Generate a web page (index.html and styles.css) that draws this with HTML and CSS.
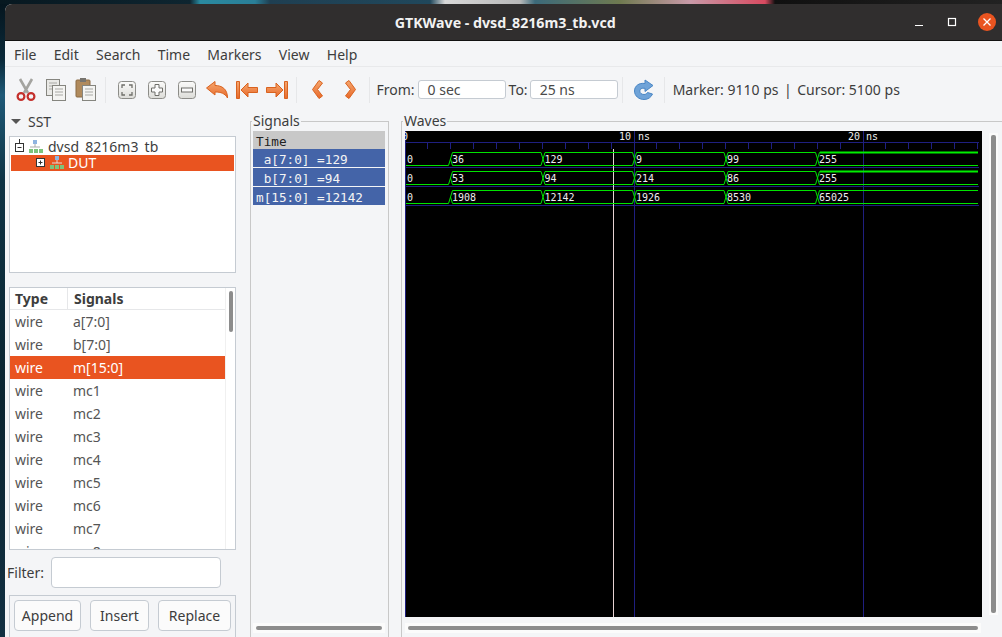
FILE: index.html
```html
<!DOCTYPE html>
<html>
<head>
	<title>GTKWave - dvsd_8216m3_tb.vcd</title>
	<meta charset="utf-8" />
	<link rel="stylesheet" href="styles.css">
</head>
<body>
<div class="wallpaper-top"></div>
<div class="window">
	<!-- title bar -->
	<div class="titlebar">
		<span class="title">GTKWave - dvsd_8216m3_tb.vcd</span>
		<div class="controls">
			<svg width="10" height="10" viewBox="0 0 10 10"><path d="M1 8.5H9" stroke="#fff" stroke-width="1.2"/></svg>
			<svg width="10" height="10" viewBox="0 0 10 10"><rect x="1.5" y="1.5" width="7" height="7" fill="none" stroke="#fff" stroke-width="1.2"/></svg>
			<span class="close"><svg width="10" height="10" viewBox="0 0 10 10"><path d="M1.5 1.5L8.5 8.5M8.5 1.5L1.5 8.5" stroke="#fff" stroke-width="1.3"/></svg></span>
		</div>
	</div>

	<div class="menubar">
		<span>File</span><span>Edit</span><span>Search</span><span>Time</span><span>Markers</span><span>View</span><span>Help</span>
	</div>

	<!-- toolbar -->
	<div class="toolbar">
		<span class="slot"><svg width="20" height="24" viewBox="0 0 20 24">
			<path d="M4 1L12 15M16 1L8 15" stroke="#a4a4a0" stroke-width="2.6" fill="none"/>
			<circle cx="5" cy="18.5" r="3.4" fill="none" stroke="#c4302c" stroke-width="2.2"/>
			<circle cx="15" cy="18.5" r="3.4" fill="none" stroke="#c4302c" stroke-width="2.2"/>
		</svg></span>
		<span class="slot"><svg width="22" height="24" viewBox="0 0 22 24">
			<rect x="1.5" y="1.5" width="13" height="16" fill="#e9e9e6" stroke="#85857f"/>
			<path d="M4 5H12M4 8H12M4 11H12" stroke="#a8a8a4"/>
			<rect x="7.5" y="7.5" width="13" height="15" fill="#f4f4f2" stroke="#85857f"/>
			<path d="M10 11H18M10 14H18M10 17H18" stroke="#a8a8a4"/>
		</svg></span>
		<span class="slot"><svg width="22" height="25" viewBox="0 0 22 25">
			<rect x="1" y="3" width="14" height="17" rx="1" fill="#b08a5c" stroke="#8a6a44"/>
			<rect x="5" y="1" width="6" height="4" fill="#77746e"/>
			<rect x="7.5" y="8.5" width="13" height="15" fill="#f4f4f2" stroke="#85857f"/>
			<path d="M10 12H18M10 15H18M10 18H18" stroke="#a8a8a4"/>
		</svg></span>
		<span class="sep"></span>
		<span class="slot"><svg width="20" height="20" viewBox="0 0 20 20">
			<rect x="1.5" y="1.5" width="17" height="17" rx="3" fill="url(#keyfill)" stroke="#8c8c88"/>
			<path d="M5 8V5H8M12 5H15V8M15 12V15H12M8 15H5V12" fill="none" stroke="#6f6f6a" stroke-width="1.3"/>
		</svg></span>
		<span class="slot"><svg width="20" height="20" viewBox="0 0 20 20">
			<rect x="1.5" y="1.5" width="17" height="17" rx="3" fill="url(#keyfill)" stroke="#8c8c88"/>
			<path d="M8 4.5H12V8H15.5V12H12V15.5H8V12H4.5V8H8Z" fill="#fafafa" stroke="#6f6f6a"/>
		</svg></span>
		<span class="slot"><svg width="20" height="20" viewBox="0 0 20 20">
			<rect x="1.5" y="1.5" width="17" height="17" rx="3" fill="url(#keyfill)" stroke="#8c8c88"/>
			<rect x="4.5" y="8" width="11" height="4" fill="#fafafa" stroke="#6f6f6a"/>
		</svg></span>
		<span class="slot"><svg width="24" height="20" viewBox="0 0 24 20">
			<path d="M1.5 8L10 1.5V5.5C17 5.5 22.5 9 22.5 18C20 13.5 16 12 10 12V15Z" fill="url(#orange)" stroke="#d9621f" stroke-linejoin="round"/>
		</svg></span>
		<span class="slot"><svg width="24" height="20" viewBox="0 0 24 20">
			<path d="M1.5 1.5H4.5V18.5H1.5Z" fill="url(#orange)" stroke="#d9621f"/>
			<path d="M6 10L13 3V7.5H22.5V12.5H13V17Z" fill="url(#orange)" stroke="#d9621f" stroke-linejoin="round"/>
		</svg></span>
		<span class="slot"><svg width="24" height="20" viewBox="0 0 24 20">
			<path d="M19.5 1.5H22.5V18.5H19.5Z" fill="url(#orange)" stroke="#d9621f"/>
			<path d="M18 10L11 3V7.5H1.5V12.5H11V17Z" fill="url(#orange)" stroke="#d9621f" stroke-linejoin="round"/>
		</svg></span>
		<span class="sep"></span>
		<span class="slot nav prev"><svg width="13" height="21" viewBox="0 0 13 21">
			<path d="M8 1.5L11.5 4L6.5 10.5L11.5 17L8 19.5L1.5 10.5Z" fill="url(#orange)" stroke="#d9621f" stroke-linejoin="round"/>
		</svg></span>
		<span class="slot nav"><svg width="13" height="21" viewBox="0 0 13 21">
			<path d="M5 1.5L1.5 4L6.5 10.5L1.5 17L5 19.5L11.5 10.5Z" fill="url(#orange)" stroke="#d9621f" stroke-linejoin="round"/>
		</svg></span>
		<span class="sep after-nav"></span>
		<span class="label from">From:</span>
		<span class="timebox">0 sec</span>
		<span class="label to">To:</span>
		<span class="timebox">25 ns</span>
		<span class="sep"></span>
		<span class="slot reload"><svg width="21" height="22" viewBox="0 0 21 22">
			<path d="M12 4.5C6 3.5 1.5 7 1.5 12C1.5 17 6 20.5 11 20.5C15 20.5 18 18.5 19.5 15L14.5 13.5C13.5 15 12.5 15.5 11 15.5C8.5 15.5 6.8 14 6.8 12C6.8 10 8.5 8.8 12 9.3V12.5L20 6.5L12 1Z" fill="#6fa3d8" stroke="#4a86c4" stroke-linejoin="round"/>
		</svg></span>
		<span class="sep"></span>
		<span class="status">Marker: 9110 ps<span class="bar">|</span>Cursor: 5100 ps</span>
	</div>

	<div class="main">
		<!-- left column -->
		<div class="left">
			<div class="sst-head"><span class="arrow"></span>SST</div>
			<div class="tree">
				<div class="tree-row top">
					<svg class="tree-ico" width="31" height="15" viewBox="0 0 31 15">
						<path d="M5.5 0V4" stroke="#333"/><rect x="1.5" y="4.5" width="8" height="8" fill="#fff" stroke="#333"/><path d="M3.5 8.5H7.5" stroke="#333"/>
						<rect x="19" y="1" width="4" height="4" fill="#8fb4e0"/><path d="M21 5V8M16 8H26" stroke="#aaa"/>
						<rect x="15" y="10" width="4" height="4" fill="#7cc47c"/><rect x="20" y="10" width="4" height="4" fill="#7cc47c"/><rect x="25" y="10" width="4" height="4" fill="#7cc47c"/>
					</svg>
					<span>dvsd_8216m3_tb</span>
				</div>
				<div class="tree-row sel">
					<svg class="tree-ico" width="30" height="15" viewBox="0 0 30 15">
						<rect x="1.5" y="2.5" width="8" height="8" fill="#fff" stroke="#333"/><path d="M3.5 6.5H7.5M5.5 4.5V8.5" stroke="#333"/>
						<rect x="20" y="0" width="4" height="4" fill="#8fb4e0"/><path d="M22 4V7M17 7H27" stroke="#ddd"/>
						<rect x="15" y="9" width="4" height="4" fill="#7cc47c"/><rect x="20" y="9" width="4" height="4" fill="#7cc47c"/><rect x="25" y="9" width="4" height="4" fill="#7cc47c"/>
					</svg>
					<span>DUT</span>
				</div>
			</div>
			<div class="siglist">
				<div class="siglist-inner">
					<div class="sig-head"><span class="col-type">Type</span><span class="col-name">Signals</span></div>
					<div class="sig-row"><span class="col-type">wire</span><span class="col-name">a[7:0]</span></div>
					<div class="sig-row"><span class="col-type">wire</span><span class="col-name">b[7:0]</span></div>
					<div class="sig-row sel"><span class="col-type">wire</span><span class="col-name">m[15:0]</span></div>
					<div class="sig-row"><span class="col-type">wire</span><span class="col-name">mc1</span></div>
					<div class="sig-row"><span class="col-type">wire</span><span class="col-name">mc2</span></div>
					<div class="sig-row"><span class="col-type">wire</span><span class="col-name">mc3</span></div>
					<div class="sig-row"><span class="col-type">wire</span><span class="col-name">mc4</span></div>
					<div class="sig-row"><span class="col-type">wire</span><span class="col-name">mc5</span></div>
					<div class="sig-row"><span class="col-type">wire</span><span class="col-name">mc6</span></div>
					<div class="sig-row"><span class="col-type">wire</span><span class="col-name">mc7</span></div>
					<div class="sig-row"><span class="col-type">wire</span><span class="col-name">mc8</span></div>
				</div>
				<div class="sig-scroll"><span class="thumb"></span></div>
			</div>
			<div class="filter"><span>Filter:</span><span class="filter-box"></span></div>
			<div class="buttons">
				<span class="btn append">Append</span><span class="btn insert">Insert</span><span class="btn replace">Replace</span>
			</div>
		</div>

		<!-- signal names -->
		<fieldset class="frame signals">
			<legend>Signals</legend>
			<div class="frame-body">
				<div class="names">
					<div class="name time">Time</div>
					<div class="name"> a[7:0] =129</div>
					<div class="name"> b[7:0] =94</div>
					<div class="name">m[15:0] =12142</div>
				</div>
				<div class="hscroll short"><span class="hthumb"></span></div>
			</div>
		</fieldset>

		<!-- waves -->
		<fieldset class="frame waves">
			<legend>Waves</legend>
			<div class="frame-body">
				<div class="wave-row">
					<svg class="wave" width="577" height="486" viewBox="405 131 577 486">
						<defs>
							<g id="bus" fill="none" stroke="#00e400">
								<path d="M406 165.5H448.5L452.5 152.5H541L545 165.5H632.5L636.5 152.5H724L728 165.5H815.5L819.5 152.5H978"/>
								<path d="M450.5 159L452.5 165.5H541L545 152.5H632.5L636.5 165.5H724L728 152.5H815.5L819.5 165.5H978"/>
							</g>
						</defs>
						<rect x="405" y="131" width="577" height="486" fill="#000"/>
						<!-- grid -->
						<g stroke="#1f1f80" fill="none">
							<path d="M405 142.5H979M405 167.5H979M405 186.5H979M405 205.5H979"/>
							<path d="M405.5 131V617M634.5 131V617M863.5 131V617"/>
							<path d="M427.5 143V149M450.5 143V149M473.5 143V149M496.5 143V149M519.5 143V149M542.5 143V149M565.5 143V149M588.5 143V149M611.5 143V149M656.5 143V149M679.5 143V149M702.5 143V149M725.5 143V149M748.5 143V149M771.5 143V149M794.5 143V149M817.5 143V149M840.5 143V149M885.5 143V149M908.5 143V149M931.5 143V149M954.5 143V149M977.5 143V149"/>
						</g>
						<path d="M613.5 149V617" stroke="#e6d2d2"/>
						<!-- traces -->
						<use href="#bus"/>
						<use href="#bus" y="19"/>
						<use href="#bus" y="38"/>
						<path d="M820 152.5H978M820 171.5H978" stroke="#00f000" stroke-width="2" fill="none"/>
						<g class="wtext">
							<text x="402" y="140">0</text><text x="619" y="140">10</text><text x="638" y="140">ns</text><text x="848" y="140">20</text><text x="866" y="140">ns</text>
							<text x="407" y="163">0</text><text x="452" y="163">36</text><text x="544.5" y="163">129</text><text x="636" y="163">9</text><text x="727" y="163">99</text><text x="819" y="163">255</text>
							<text x="407" y="182">0</text><text x="452" y="182">53</text><text x="544.5" y="182">94</text><text x="636" y="182">214</text><text x="727" y="182">86</text><text x="819" y="182">255</text>
							<text x="407" y="201">0</text><text x="452" y="201">1908</text><text x="544.5" y="201">12142</text><text x="636" y="201">1926</text><text x="727" y="201">8530</text><text x="819" y="201">65025</text>
						</g>
					</svg>
					<div class="vscroll"><span class="vthumb"></span></div>
				</div>
				<div class="hscroll long"><span class="hthumb"></span></div>
			</div>
		</fieldset>
	</div>
</div>
<svg class="defs" width="0" height="0">
	<defs>
		<linearGradient id="orange" x1="0" y1="0" x2="0" y2="1"><stop offset="0" stop-color="#f5a870"/><stop offset="1" stop-color="#e8692a"/></linearGradient>
		<linearGradient id="keyfill" x1="0" y1="0" x2="0" y2="1"><stop offset="0" stop-color="#fbfbfa"/><stop offset="1" stop-color="#dcdcd8"/></linearGradient>
	</defs>
</svg>
</body>
</html>
```

FILE: styles.css
```css
html, body { margin: 0; height: 637px; overflow: hidden; }
body {
	width: 1002px;
	background: linear-gradient(180deg, #05141c 0, #0a2a3a 60px, #1f5a78 95px, #0f3445 180px, #0a2430 400px, #123042 637px);
	font-family: "Noto Sans", sans-serif;
	font-size: 14px;
	color: #3d3d3d;
}
.wallpaper-top {
	height: 4px;
	background: linear-gradient(90deg, #071820 0, #0e2530 190px, #2a8aa0 200px, #2a7f98 255px, #1f3f52 270px, #20485c 430px, #d8d8d8 445px, #b8b8b8 520px, #3c6a7a 535px, #6f7a50 620px, #c89aa8 690px, #d84a60 765px, #101010 775px, #222 1002px);
}
.defs { position: absolute; }

.window {
	margin-left: 5px;
	height: 633px;
	background: #f4f5f7;
	border-radius: 7px 0 0 0;
	overflow: hidden;
	display: flex;
	flex-direction: column;
}

/* title bar */
.titlebar {
	height: 36px;
	flex: none;
	background: #302e2e;
	border-bottom: 1px solid #111;
	display: flex;
	align-items: center;
	justify-content: center;
	position: relative;
}
.title { color: #f2f2f2; font-weight: bold; font-size: 14.2px; margin-left: 3.5px; }
.controls { position: absolute; top: 0; right: 6px; height: 36px; display: flex; align-items: center; }
.controls svg { display: block; }
.controls > svg { margin-right: 21px; }
.controls > svg:first-child { margin-right: 23px; }
.close {
	width: 18px; height: 18px; border-radius: 50%;
	background: #e95420;
	display: flex; align-items: center; justify-content: center;
}

.menubar {
	height: 26px;
	flex: none;
	border-bottom: 1px solid #e8e9eb;
	display: flex;
	align-items: center;
	padding: 2px 0 0 9px;
	box-sizing: border-box;
	gap: 17.3px;
	font-size: 14px;
}

/* toolbar */
.toolbar {
	height: 43px;
	flex: none;
	display: flex;
	align-items: center;
	padding-left: 5.5px;
	padding-top: 2px;
	box-sizing: border-box;
}
.slot { width: 30px; display: flex; justify-content: center; align-items: center; }
.slot svg { display: block; }
.slot.nav { width: 33px; }
.slot.prev { margin-left: -2px; }
.slot.reload { margin-right: 1px; }
.sep { width: 1px; height: 26px; background: #e6e7e9; margin: 0 6px 0 4px; }
.sep.after-nav { margin-left: 2px; }
.label { font-size: 14px; }
.from { margin-left: 1px; margin-right: 3px; }
.to { margin: 0 2px 0 3px; }
.timebox {
	width: 88px; height: 19px; box-sizing: border-box;
	background: #fff;
	border: 1px solid #c5cbd2;
	border-radius: 3px;
	padding-left: 9px;
	line-height: 17px;
	font-size: 14px;
	color: #4a4a4a;
}
.status { margin-left: 2px; font-size: 14px; white-space: nowrap; }
.bar { margin: 0 5.5px; }

.main { flex: 1; display: flex; min-height: 0; }

/* left column */
.left { width: 245px; flex: none; padding-left: 4px; box-sizing: border-box; }
.sst-head { height: 26px; display: flex; align-items: center; font-size: 14px; padding: 0 0 4px 2px; box-sizing: border-box; }
.arrow {
	width: 0; height: 0; margin-right: 7px;
	border-left: 5px solid transparent;
	border-right: 5px solid transparent;
	border-top: 5px solid #555;
}
.tree {
	width: 227px; height: 137px; box-sizing: border-box;
	background: #fff;
	border: 1px solid #c5cbd2;
	padding: 1px;
}
.tree-row { display: flex; overflow: hidden; white-space: nowrap; }
.tree-row.top { height: 15px; padding-left: 3px; align-items: flex-start; line-height: 17px; margin-bottom: 2px; }
.tree-row.sel { height: 16px; background: #e95420; color: #fff; padding-left: 24px; margin-top: 1px; line-height: 16px; align-items: center; box-sizing: border-box; }
.tree-ico { flex: none; margin-right: 3px; }
.tree-row.top .tree-ico { margin-top: 1px; }
.siglist {
	width: 227px; height: 263px; box-sizing: border-box;
	margin-top: 14px;
	background: #fff;
	border: 1px solid #c5cbd2;
	display: flex;
	overflow: hidden;
}
.siglist-inner { width: 215px; flex: none; overflow: hidden; }
.sig-head { height: 21px; border-bottom: 1px solid #e6e7e9; display: flex; align-items: center; font-weight: bold; }
.sig-head .col-type { border-right: 1px solid #e6e7e9; height: 21px; line-height: 21px; }
.sig-row { height: 23px; display: flex; align-items: center; color: #555; }
.sig-row.sel { background: #e95420; color: #fff; }
.col-type { width: 52px; padding-left: 5px; flex: none; }
.col-name { padding-left: 6px; }
.sig-head .col-name { padding-left: 6px; }
.sig-scroll { flex: 1; border-left: 1px solid #f0f0f0; padding: 3px 0 0 3px; }
.thumb { display: block; width: 4px; height: 41px; background: #8c8c8c; border-radius: 2px; }
.filter { display: flex; align-items: center; margin: 7px 0 0 -2px; }
.filter-box {
	width: 170px; height: 31px; box-sizing: border-box;
	background: #fff;
	border: 1px solid #c5cbd2;
	border-radius: 4px;
	margin-left: 7px;
}
.buttons {
	width: 227px; height: 60px; box-sizing: border-box;
	margin-top: 7px;
	border: 1px solid #c5cbd2;
	display: flex;
	padding: 4px 4px;
	align-items: flex-start;
}
.btn {
	height: 31px; box-sizing: border-box;
	background: #fbfbfb;
	border: 1px solid #c5cbd2;
	border-radius: 4px;
	text-align: center;
	line-height: 29px;
}
.append { width: 67px; margin-right: 9px; }
.insert { width: 59px; margin-right: 9px; }
.replace { width: 73px; }

/* gtk frames */
.frame {
	margin: 2px 0 0 0;
	padding: 0;
	border: 1px solid #c8c8c8;
	border-bottom: none;
	min-width: 0;
	height: 560px;
	box-sizing: border-box;
}
.frame legend { padding: 0 1px; margin-left: 1px; font-size: 14px; line-height: 18px; }
.frame-body { height: 503px; display: flex; flex-direction: column; }
.signals { width: 139px; flex: none; }
.waves { width: 601px; flex: none; margin-left: 12px; border-right: none; }
.names { margin: 1px 3px 0 2px; font-family: "DejaVu Sans Mono", monospace; font-size: 12.7px; }
.name {
	height: 18px; margin-bottom: 1px;
	background: #4464a8;
	color: #f4f4f4;
	line-height: 21px;
	padding-left: 3px;
	white-space: pre;
}
.name.time { background: #c8c8c8; color: #222; margin-bottom: 0; }
.wave-row { display: flex; margin: 1px 0 0 3px; }
.wave { display: block; flex: none; }
.wtext { font-family: "DejaVu Sans Mono", monospace; font-size: 10px; fill: #eee; }
.vscroll { width: 9px; margin: 2px 0 0 7px; height: 482px; background: #fbfbfb; padding: 2px 0 0 2px; box-sizing: border-box; }
.vthumb { display: block; width: 5px; height: 478px; background: #8c8c8c; border-radius: 2px; }
.hscroll { height: 10px; margin-top: auto; background: #fbfbfb; box-sizing: border-box; padding: 3px 3px 0; flex: none; }
.hthumb { display: block; height: 4px; background: #8c8c8c; border-radius: 2px; }
.hscroll.short { margin-left: 2px; width: 132px; }
.hscroll.long { margin-left: 3px; width: 576px; }
```
